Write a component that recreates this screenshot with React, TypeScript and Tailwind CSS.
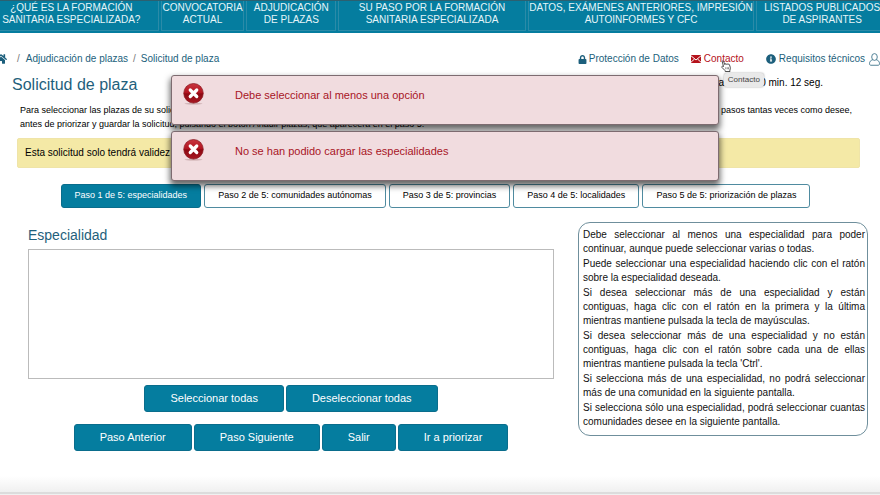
import React from 'react';
import { FaHome, FaInfoCircle, FaLock } from 'react-icons/fa';

const menu = [
  ['¿QUÉ ES LA FORMACIÓN', 'SANITARIA ESPECIALIZADA?'],
  ['CONVOCATORIA', 'ACTUAL'],
  ['ADJUDICACIÓN', 'DE PLAZAS'],
  ['SU PASO POR LA FORMACIÓN', 'SANITARIA ESPECIALIZADA'],
  ['DATOS, EXÁMENES ANTERIORES, IMPRESIÓN', 'AUTOINFORMES Y CFC'],
  ['LISTADOS PUBLICADOS', 'DE ASPIRANTES'],
];

const steps = [
  'Paso 1 de 5: especialidades',
  'Paso 2 de 5: comunidades autónomas',
  'Paso 3 de 5: provincias',
  'Paso 4 de 5: localidades',
  'Paso 5 de 5: priorización de plazas',
];

const help = [
  'Debe seleccionar al menos una especialidad para poder continuar, aunque puede seleccionar varias o todas.',
  'Puede seleccionar una especialidad haciendo clic con el ratón sobre la especialidad deseada.',
  'Si desea seleccionar más de una especialidad y están contiguas, haga clic con el ratón en la primera y la última mientras mantiene pulsada la tecla de mayúsculas.',
  "Si desea seleccionar más de una especialidad y no están contiguas, haga clic con el ratón sobre cada una de ellas mientras mantiene pulsada la tecla 'Ctrl'.",
  'Si selecciona más de una especialidad, no podrá seleccionar más de una comunidad en la siguiente pantalla.',
  'Si selecciona sólo una especialidad, podrá seleccionar cuantas comunidades desee en la siguiente pantalla.',
];

const EnvelopeIcon = () => (
  <svg viewBox="0 0 20 16" className="h-2 w-[10px]" aria-hidden="true">
    <rect width="20" height="16" fill="#b5121b" />
    <path d="M0 1.5 10 10 20 1.5M0 14.5 7 8M20 14.5 13 8" fill="none" stroke="#fff" strokeWidth="2" />
  </svg>
);

const PersonIcon = () => (
  <svg viewBox="0 0 22 26" className="h-[13px] w-[11px]" fill="none" stroke="#41758c" strokeWidth="1.8" aria-hidden="true">
    <ellipse cx="11" cy="8" rx="5.6" ry="6.8" />
    <path d="M7.5 13.5C3 15 1 17 1 21.5c0 2 1 3 3 3h14c2 0 3-1 3-3 0-4.500-2-6.500-6.500-8" />
  </svg>
);

const HandCursor = () => (
  <svg viewBox="0 0 20 24" className="h-3 w-[10px]" fill="#fff" stroke="#222" strokeWidth="1.6" strokeLinejoin="round" aria-hidden="true">
    <path d="M5 13 2.500 3.500C2 1.500 4.500 1 5.200 2.800L7.500 9c0-1.800 2.600-2 3.200-.3.300-1.600 2.600-1.500 3.200.2.500-1.300 2.500-1 3 .6l1.600 5c.7 2.500-.3 4-.8 6l.3 2.500H8.500L8 21l-6-6c-1.500-1.800.8-3.500 3-2Z" />
    <path d="M9.500 14.500v4M12.500 14.500v4M15 14.500v4" strokeWidth="1" />
  </svg>
);

const ErrorIcon = () => (
  <svg viewBox="0 0 42 44" className="h-[22px] w-[21px] shrink-0" aria-hidden="true">
    <defs>
      <linearGradient id="errorFill" x1="0" y1="0" x2="0" y2="1">
        <stop offset="0" stopColor="#c93640" />
        <stop offset="0.5" stopColor="#b0121e" />
        <stop offset="0.52" stopColor="#8c0812" />
        <stop offset="1" stopColor="#a81822" />
      </linearGradient>
    </defs>
    <ellipse cx="21" cy="41.500" rx="18" ry="1.500" fill="#c9a9ac" />
    <circle cx="21" cy="20.500" r="19.500" fill="url(#errorFill)" stroke="#8a1a22" strokeWidth="1.500" />
    <path d="m14.500 14 13 13m0-13-13 13" stroke="#fff" strokeWidth="6.500" strokeLinecap="round" />
  </svg>
);

const ErrorMessage: React.FC<{ text: string }> = ({ text }) => (
  <div role="alert" className="flex h-[50px] items-start gap-[31px] rounded-[3px] border border-[#7d6b70] bg-[#f1dcdf] px-[11px] pt-[7px] text-[11px] text-[#a8151f] shadow-[0_4px_6px_1px_rgba(0,0,0,0.6)]">
    <ErrorIcon />
    <p className="pt-1 leading-4">{text}</p>
  </div>
);

const ActionButton: React.FC<{ children: React.ReactNode }> = ({ children }) => (
  <button type="button" className="h-[27px] rounded-[3px] border border-[#0a6d8c] bg-[#057d9f] px-[25px] text-[11px] text-white">
    {children}
  </button>
);

const App: React.FC = () => {
  return (
    <div className="relative flex min-h-screen flex-col overflow-hidden bg-white font-['Liberation_Sans',Arial,sans-serif] text-[10px] text-[#222]">
      <header className="border-t border-[#2c6070] bg-[#057d9f] pb-[2px]">
        <nav className="-mr-2 -ml-4 grid grid-cols-[175fr_84fr_90fr_188fr_227fr_132fr] gap-[2px]">
          {menu.map(([first, second]) => (
            <a key={first} href="#" className="border-x border-b border-[#2b8ba8] pt-px pb-1 text-center leading-3 whitespace-nowrap text-[#e6f5f9]">
              {first}
              <br />
              {second}
            </a>
          ))}
        </nav>
      </header>

      <div className="flex items-center justify-between pt-[19px] leading-[14px] text-[#1c5f7c]">
        <nav className="-ml-[5px] flex items-center" aria-label="Ruta">
          <a href="#" aria-label="Inicio"><FaHome className="size-3" /></a>
          <span className="pr-[6px] pl-[10px] text-[#777]">/</span>
          <a href="#">Adjudicación de plazas</a>
          <span className="px-[5px] text-[#777]">/</span>
          <a href="#">Solicitud de plaza</a>
        </nav>
        <div className="flex items-center">
          <a href="#" className="mr-3 flex items-center gap-[2px]"><FaLock className="size-[9px]" />Protección de Datos</a>
          <div className="relative mr-[22px]">
            <a href="#" className="flex items-center gap-[3px] text-[#b5121b]"><EnvelopeIcon />Contacto</a>
            <div className="absolute top-2 left-[30px] z-30"><HandCursor /></div>
            <div role="tooltip" className="absolute top-[21px] left-[33px] z-20 rounded-[3px] bg-[#e9e9e9] px-1 text-[8px] leading-[14px] text-[#444] shadow-[0_0_2px_rgba(0,0,0,0.4)]">Contacto</div>
          </div>
          <a href="#" className="mr-1 flex items-center gap-[3px]"><FaInfoCircle className="size-[10px]" />Requisitos técnicos</a>
          <a href="#" aria-label="Usuario"><PersonIcon /></a>
        </div>
      </div>

      <main className="flex flex-col">
        <div className="flex items-center justify-between pt-2 pr-[57px] pl-3">
          <h1 className="text-base leading-[22px] text-[#1f5f7c]">Solicitud de plaza</h1>
          <p className="pb-1 leading-4 text-black">Tiempo restante de consulta: 00 h. 30 min. 12 seg.</p>
        </div>
        <div className="pt-[7px] pr-[28px] pl-5 text-[9px] leading-[14px] text-black">
          <p className="flex justify-between"><span>Para seleccionar las plazas de su solicitud,</span><span>pasos tantas veces como desee,</span></p>
          <p>antes de priorizar y guardar la solicitud, pulsando el botón Añadir plazas, que aparecerá en el paso 5.</p>
        </div>
        <p className="mt-[7px] mr-5 ml-[17px] rounded-[2px] border border-[#efe4a8] bg-[#f4e9a6] px-[7px] py-[6px] leading-4 text-black">Esta solicitud solo tendrá validez y</p>

        <div className="mt-4 mr-[9px] flex justify-center gap-[3px]">
          {steps.map((step, i) => (
            <button
              key={step}
              type="button"
              className={`h-6 rounded-[3px] border px-[13px] text-[9px] ${i === 0 ? 'border-[#0a6d8c] bg-[#057d9f] text-white' : 'border-[#4f8ba0] bg-white text-black'}`}
            >
              {step}
            </button>
          ))}
        </div>

        <div className="mt-[14px] flex items-start gap-6 pr-3 pl-7">
          <section className="flex-1 pt-[3px]">
            <label htmlFor="especialidad" className="block text-sm leading-5 text-[#1f5f7c]">Especialidad</label>
            <select id="especialidad" multiple className="mt-1 block h-[130px] w-full border border-[#bbb] bg-white" />
            <div className="mt-[6px] flex justify-center gap-[2px]">
              <ActionButton>Seleccionar todas</ActionButton>
              <ActionButton>Deseleccionar todas</ActionButton>
            </div>
            <div className="mt-3 flex justify-center gap-[2px]">
              <ActionButton>Paso Anterior</ActionButton>
              <ActionButton>Paso Siguiente</ActionButton>
              <ActionButton>Salir</ActionButton>
              <ActionButton>Ir a priorizar</ActionButton>
            </div>
          </section>
          <aside className="flex w-[290px] flex-col gap-px rounded-xl border border-[#6f8f9c] pt-[5px] pr-[2px] pb-[6px] pl-1 text-justify leading-[14px] text-[#111]">
            {help.map((line) => (
              <p key={line}>{line}</p>
            ))}
          </aside>
        </div>
      </main>

      <footer className="mt-auto">
        <div className="h-4 bg-linear-to-b from-white to-[#f0f0f0]" />
        <div className="h-[3px] border-t-2 border-[#dcdcdc] bg-[#f0f0f0]" />
      </footer>

      <div className="absolute top-[75px] right-[161px] left-[171px] z-10 flex flex-col gap-[6px]">
        <ErrorMessage text="Debe seleccionar al menos una opción" />
        <ErrorMessage text="No se han podido cargar las especialidades" />
      </div>
    </div>
  );
};

export default App;
